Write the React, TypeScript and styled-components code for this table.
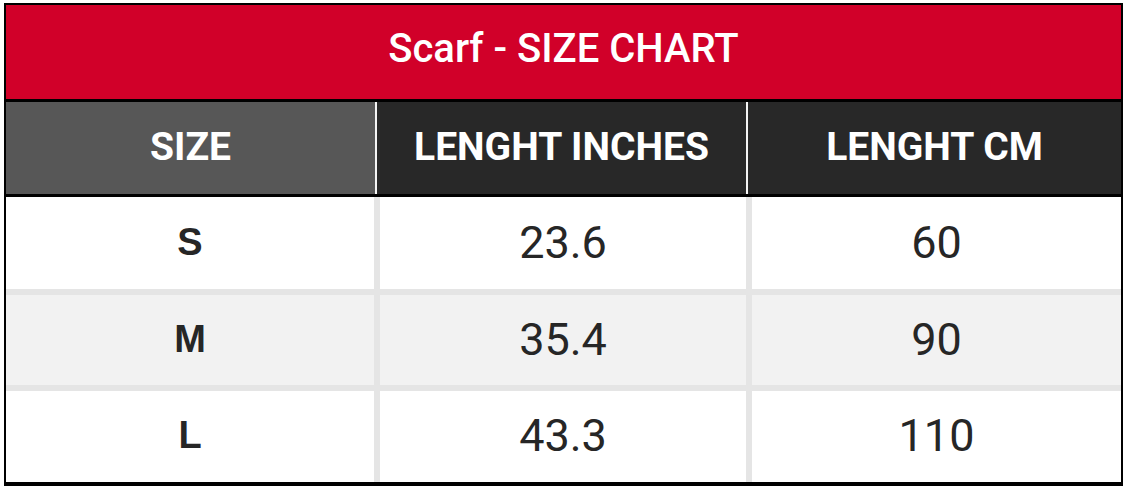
import styled, { createGlobalStyle } from "styled-components";

const GlobalStyle = createGlobalStyle`
  html, body {
    margin: 0;
    padding: 0;
    background: #ffffff;
  }
  body {
    font-family: Roboto, "Liberation Sans", Arial, sans-serif;
  }
`;

const Chart = styled.div`
  margin: 3px 3px 0 4px;
  width: 1115px;
  border-style: solid;
  border-color: #000;
  border-width: 2px 2px 4px 2px;
  display: flex;
  flex-direction: column;
`;

const Title = styled.div`
  height: 94px;
  box-sizing: border-box;
  padding-bottom: 7px;
  background: #d10029;
  color: #fff;
  display: flex;
  align-items: center;
  justify-content: center;
  font-size: 40px;
  font-weight: 500;
  border-bottom: 3px solid #000;
  box-sizing: content-box;
  height: 87px;
`;

const HeadRow = styled.div`
  display: grid;
  grid-template-columns: 369px 371px 1fr;
  height: 92px;
  border-bottom: 3px solid #000;
`;

const HeadCell = styled.div<{ $first?: boolean }>`
  display: flex;
  align-items: center;
  justify-content: center;
  padding-bottom: 3px;
  background: ${(p) => (p.$first ? "#575757" : "#282828")};
  border-left: ${(p) => (p.$first ? "none" : "2px solid #f4f4f4")};
  color: #fff;
  font-size: 39px;
  font-weight: 700;
`;

const BodyRow = styled.div<{ $shade?: boolean; $top?: boolean; $h: number }>`
  display: grid;
  grid-template-columns: 368px 372px 1fr;
  height: ${(p) => p.$h}px;
  background: ${(p) => (p.$shade ? "#f2f2f2" : "#ffffff")};
  border-top: ${(p) => (p.$top ? "6px solid #e5e5e5" : "none")};
  box-sizing: content-box;
`;

const Cell = styled.div<{ $label?: boolean }>`
  display: flex;
  align-items: center;
  justify-content: center;
  padding-bottom: 2px;
  color: #262626;
  border-left: ${(p) => (p.$label ? "none" : "6px solid #e5e5e5")};
  font-family: ${(p) =>
    p.$label ? '"Liberation Sans", Arial, sans-serif' : "Roboto, sans-serif"};
  font-size: ${(p) => (p.$label ? "38px" : "45px")};
  font-weight: ${(p) => (p.$label ? 700 : 400)};
`;

const rows = [
  { size: "S", inches: "23.6", cm: "60", h: 92 },
  { size: "M", inches: "35.4", cm: "90", h: 90 },
  { size: "L", inches: "43.3", cm: "110", h: 91 },
];

export default function App() {
  return (
    <>
      <GlobalStyle />
      <Chart>
        <Title>Scarf - SIZE CHART</Title>
        <HeadRow>
          <HeadCell $first>SIZE</HeadCell>
          <HeadCell>LENGHT INCHES</HeadCell>
          <HeadCell>LENGHT CM</HeadCell>
        </HeadRow>
        {rows.map((r, i) => (
          <BodyRow key={r.size} $shade={i === 1} $top={i > 0} $h={r.h}>
            <Cell $label>{r.size}</Cell>
            <Cell>{r.inches}</Cell>
            <Cell>{r.cm}</Cell>
          </BodyRow>
        ))}
      </Chart>
    </>
  );
}
